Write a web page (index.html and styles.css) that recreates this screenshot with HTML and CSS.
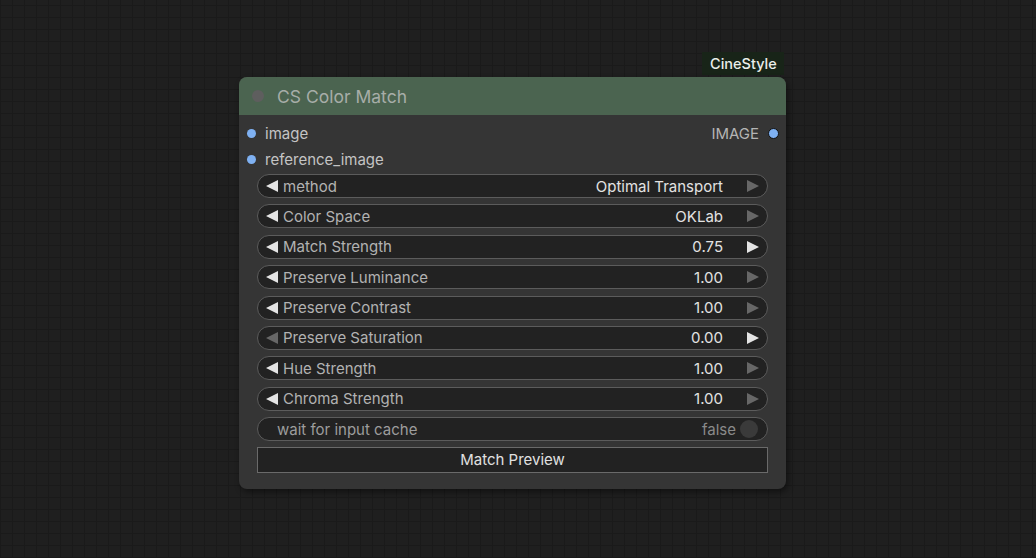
FILE: index.html
```html
<!DOCTYPE html>
<html lang="en">
<head>
    <meta charset="UTF-8">
    <meta name="viewport" content="width=device-width, initial-scale=1.0">
    <title>CS Color Match</title>
    <link rel="stylesheet" href="styles.css">
</head>
<body>

    <div class="canvas">
        <div class="badge">CineStyle</div>

        <div class="node">
            <div class="node-header">
                <span class="collapse-dot"></span>
                <span class="node-title">CS Color Match</span>
            </div>

            <div class="node-body">
                <div class="slots">
                    <div class="slot-row">
                        <div class="slot in"><span class="dot"></span>image</div>
                        <div class="slot out">IMAGE<span class="dot outlined"></span></div>
                    </div>
                    <div class="slot-row">
                        <div class="slot in"><span class="dot"></span>reference_image</div>
                    </div>
                </div>

                <div class="widgets">
                    <div class="widget">
                        <span class="arrow left"></span>
                        <span class="label">method</span>
                        <span class="value">Optimal Transport</span>
                        <span class="arrow right dim"></span>
                    </div>
                    <div class="widget">
                        <span class="arrow left"></span>
                        <span class="label">Color Space</span>
                        <span class="value">OKLab</span>
                        <span class="arrow right dim"></span>
                    </div>
                    <div class="widget">
                        <span class="arrow left"></span>
                        <span class="label">Match Strength</span>
                        <span class="value">0.75</span>
                        <span class="arrow right"></span>
                    </div>
                    <div class="widget">
                        <span class="arrow left"></span>
                        <span class="label">Preserve Luminance</span>
                        <span class="value">1.00</span>
                        <span class="arrow right dim"></span>
                    </div>
                    <div class="widget">
                        <span class="arrow left"></span>
                        <span class="label">Preserve Contrast</span>
                        <span class="value">1.00</span>
                        <span class="arrow right dim"></span>
                    </div>
                    <div class="widget">
                        <span class="arrow left dim"></span>
                        <span class="label">Preserve Saturation</span>
                        <span class="value">0.00</span>
                        <span class="arrow right"></span>
                    </div>
                    <div class="widget">
                        <span class="arrow left"></span>
                        <span class="label">Hue Strength</span>
                        <span class="value">1.00</span>
                        <span class="arrow right dim"></span>
                    </div>
                    <div class="widget">
                        <span class="arrow left"></span>
                        <span class="label">Chroma Strength</span>
                        <span class="value">1.00</span>
                        <span class="arrow right dim"></span>
                    </div>
                    <div class="widget toggle">
                        <span class="label">wait for input cache</span>
                        <span class="value">false</span>
                        <span class="knob"></span>
                    </div>
                    <button class="node-button">Match Preview</button>
                </div>
            </div>
        </div>
    </div>

</body>
</html>
```

FILE: styles.css
```css
* {
    margin: 0;
    padding: 0;
    box-sizing: border-box;
}

body {
    font-family: Inter, "Noto Sans", Arial, sans-serif;
    width: 1036px;
    height: 558px;
    overflow: hidden;
    background-color: #1f1f1f;
    background-image:
        repeating-linear-gradient(90deg, #1a1a1a 0 1px, transparent 1px 12px),
        repeating-linear-gradient(0deg, #1a1a1a 0 1px, transparent 1px 12px);
}

.canvas {
    position: relative;
    width: 100%;
    height: 100%;
}

.badge {
    position: absolute;
    left: 702px;
    top: 52px;
    height: 23px;
    padding: 0 7px 0 8px;
    background: #182418;
    color: #eaeeea;
    font-size: 14.5px;
    font-weight: 500;
    line-height: 23px;
}

.node {
    position: absolute;
    left: 239px;
    top: 77px;
    width: 547px;
    height: 412px;
    background: #353535;
    border-radius: 8px;
    box-shadow: 2px 3px 6px rgba(0, 0, 0, 0.45);
    overflow: hidden;
}

.node-header {
    height: 38px;
    background: #4b6450;
    display: flex;
    align-items: center;
    padding-left: 13px;
}

.collapse-dot {
    width: 12px;
    height: 12px;
    border-radius: 50%;
    background: #5e5e5e;
    margin-right: 13px;
}

.node-title {
    color: #a7ada8;
    font-size: 17.5px;
}

.node-body {
    padding: 5px 0 0;
}

.slot-row {
    display: flex;
    justify-content: space-between;
    height: 26px;
    align-items: center;
    color: #c4c4c4;
    font-size: 15px;
}

.slot {
    display: flex;
    align-items: center;
}

.slot.in {
    padding-left: 8px;
}

.slot.out {
    padding-right: 7px;
    color: #b4b4b4;
}

.dot {
    width: 9px;
    height: 9px;
    border-radius: 50%;
    background: #7fb1f2;
    margin-right: 9px;
}

.dot.outlined {
    margin: 0 0 0 9px;
    width: 11px;
    height: 11px;
    border: 1.5px solid #111;
}

.widgets {
    display: flex;
    flex-direction: column;
    gap: 6.4px;
    padding: 2px 18px 0;
}

.widget {
    height: 24px;
    border: 1px solid #5c5c5c;
    border-radius: 12px;
    background: #222;
    display: flex;
    align-items: center;
    font-size: 15px;
    padding: 0 8px;
}

.label {
    color: #b2b2b2;
    flex: 1;
}

.value {
    color: #e2e2e2;
}

.arrow {
    width: 0;
    height: 0;
    border-top: 6px solid transparent;
    border-bottom: 6px solid transparent;
}

.arrow.left {
    border-right: 12px solid #e4e4e4;
    margin-right: 5px;
}

.arrow.right {
    border-left: 12px solid #e4e4e4;
    margin-left: 24px;
}

.arrow.left.dim {
    border-right-color: #676767;
}

.arrow.right.dim {
    border-left-color: #676767;
}

.widget.toggle {
    padding: 0 9px 0 19px;
}

.toggle .label {
    color: #9d9d9d;
}

.toggle .value {
    color: #8a8a8a;
    margin-right: 4px;
}

.knob {
    width: 18px;
    height: 18px;
    border-radius: 50%;
    background: #3a3a3a;
}

.node-button {
    height: 26px;
    border: 1px solid #6a6a6a;
    background: #222;
    color: #e0e0e0;
    font-family: inherit;
    font-size: 15px;
    margin-top: -1px;
}
```
